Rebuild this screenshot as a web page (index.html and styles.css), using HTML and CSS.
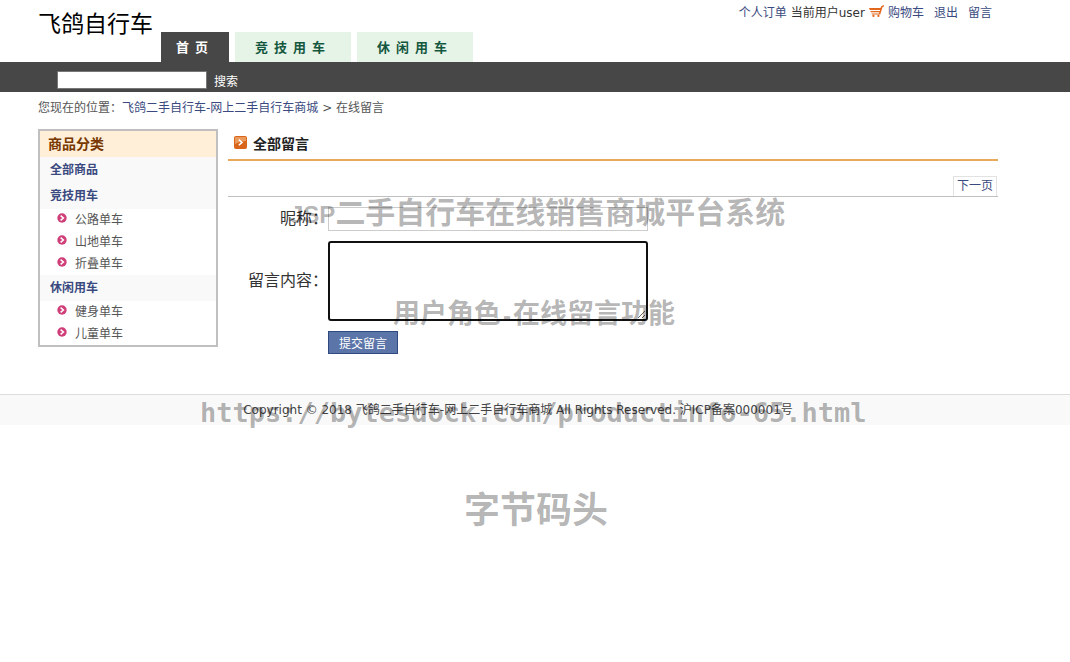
FILE: index.html
```html
<!DOCTYPE html>
<html lang="zh-CN">
<head>
  <meta charset="UTF-8">
  <meta name="viewport" content="width=device-width, initial-scale=1.0">
  <title>在线留言</title>
  <link rel="stylesheet" href="styles.css">
</head>
<body>
  <!-- 图标 -->
  <svg class="symbols" aria-hidden="true">
    <symbol id="dot" viewBox="0 0 10 10">
      <circle cx="5" cy="5" r="4.7" fill="#cf3e78"/>
      <path d="M3.6 2.6 6.4 5 3.6 7.4" fill="none" stroke="#fff" stroke-width="1.5"/>
    </symbol>
  </svg>

  <header class="header wrap">
    <div class="logo">飞鸽自行车</div>
    <nav class="tabs">
      <a class="tab active" href="#">首页</a>
      <a class="tab" href="#">竞技用车</a>
      <a class="tab" href="#">休闲用车</a>
    </nav>
    <div class="user-links">
      <a href="#">个人订单</a>
      <span class="user">当前用户user</span>
      <svg class="cart" viewBox="0 0 15 13">
        <path d="M0 3h11.4L12.6.9 15 0v1.5l-1.4.5-2.4 7.6H3L2.4 8.4H10l.4-1.1H2L1.2 5.9h9.7l.3-1H.8z" fill="#e2661c"/>
        <circle cx="4.4" cy="10.9" r="1.1" fill="#e2661c"/>
        <circle cx="9.4" cy="10.9" r="1.1" fill="#e2661c"/>
      </svg>
      <a class="cart-link" href="#">购物车</a>
      <a class="spaced" href="#">退出</a>
      <a class="spaced" href="#">留言</a>
    </div>
  </header>

  <div class="search-bar">
    <form class="search wrap">
      <input class="search-input" type="text" aria-label="搜索商品">
      <button class="search-button" type="button">搜索</button>
    </form>
  </div>

  <div class="breadcrumb wrap">您现在的位置：<a href="#">飞鸽二手自行车-网上二手自行车商城</a> &gt; 在线留言</div>

  <div class="content wrap">
    <aside class="sidebar">
      <h2 class="side-title">商品分类</h2>
      <a class="category" href="#">全部商品</a>
      <a class="category" href="#">竞技用车</a>
      <ul class="sub-list">
        <li><svg class="dot"><use href="#dot"/></svg><a href="#">公路单车</a></li>
        <li><svg class="dot"><use href="#dot"/></svg><a href="#">山地单车</a></li>
        <li><svg class="dot"><use href="#dot"/></svg><a href="#">折叠单车</a></li>
      </ul>
      <a class="category" href="#">休闲用车</a>
      <ul class="sub-list">
        <li><svg class="dot"><use href="#dot"/></svg><a href="#">健身单车</a></li>
        <li><svg class="dot"><use href="#dot"/></svg><a href="#">儿童单车</a></li>
      </ul>
    </aside>

    <main class="main">
      <h1 class="main-title">
        <svg class="title-icon" viewBox="0 0 13 13">
          <rect width="13" height="13" rx="2" fill="#d9651b"/>
          <path d="M1 2Q1 1 2 1h9q1 0 1 1v3Q6 5 1 8z" fill="#ec9a5c"/>
          <path d="M4.8 3.6 8 6.4 4.8 9.2" fill="none" stroke="#fff" stroke-width="1.5"/>
        </svg>
        全部留言
      </h1>
      <div class="pager"><a href="#">下一页</a></div>
      <form class="message-form">
        <label for="nickname">昵称：</label>
        <input class="nickname" id="nickname" type="text">
        <label for="message">留言内容：</label>
        <textarea class="message" id="message"></textarea>
        <button class="submit" type="button">提交留言</button>
      </form>
    </main>
  </div>

  <footer class="footer">
    <div class="wrap">Copyright © 2018 飞鸽二手自行车-网上二手自行车商城 All Rights Reserved. 沪ICP备案000001号</div>
  </footer>

  <!-- 水印 -->
  <div class="watermark mark-title"><span class="latin">JSP</span>二手自行车在线销售商城平台系统</div>
  <div class="watermark mark-feature">用户角色<span class="mono">-</span>在线留言功能</div>
  <div class="watermark mark-url">https://bytesdock.com/productinfo-65.html</div>
  <div class="watermark mark-brand">字节码头</div>
</body>
</html>
```

FILE: styles.css
```css
* {
  box-sizing: border-box;
}
body {
  margin: 0;
  position: relative;
  min-height: 100vh;
  background-color: #fff;
  color: #333;
  font-family: "DejaVu Sans", "Noto Sans CJK SC", sans-serif;
  font-size: 12px;
  line-height: 18px;
}
a {
  color: #3a4a80;
  text-decoration: none;
}
ul, h1, h2 {
  margin: 0;
  padding: 0;
  list-style: none;
}
input, textarea, button {
  font-family: inherit;
  font-size: 12px;
}
.symbols {
  position: absolute;
  width: 0;
  height: 0;
}
.wrap {
  padding-left: 38px;
  padding-right: 72px;
}

/* 头部 */
.header {
  display: flex;
  height: 62px;
}
.logo {
  padding-top: 8px;
  margin-right: 8px;
  color: #000;
  font-size: 23px;
  line-height: 32px;
}
.tabs {
  display: flex;
  align-items: flex-end;
  gap: 6px;
}
.tab {
  padding: 0 20px;
  background-color: #e5f4e7;
  color: #14573f;
  font-size: 13px;
  font-weight: bold;
  line-height: 32px;
  height: 30px;
  letter-spacing: 6px;
}
.tab.active {
  padding: 0 15px;
  background-color: #474747;
  color: #fff;
}
.user-links {
  display: flex;
  margin-left: auto;
  padding: 4px 6px 0 0;
}
.user {
  margin: 0 4px;
}
.cart {
  width: 15px;
  height: 13px;
  margin-top: 1px;
}
.cart-link {
  margin-left: 4px;
}
.spaced {
  margin-left: 10px;
}

/* 搜索 */
.search-bar {
  background-color: #474747;
}
.search {
  display: flex;
  align-items: center;
  height: 30px;
  padding-top: 6px;
}
.search-input {
  width: 150px;
  height: 18px;
  margin-left: 19px;
  border: 1px solid #777;
  background-color: #fff;
}
.search-button {
  padding: 0 7px;
  border: 0;
  background: none;
  color: #fff;
}

.breadcrumb {
  padding-top: 7px;
  height: 37px;
  color: #555;
}

/* 左侧分类 */
.content {
  display: flex;
  align-items: flex-start;
  gap: 10px;
}
.sidebar {
  width: 180px;
  flex-shrink: 0;
  border: 2px solid #c0c0c0;
}
.side-title {
  padding-left: 8px;
  background-color: #ffefd9;
  color: #783800;
  font-size: 14px;
  line-height: 26px;
}
.category {
  display: block;
  padding-left: 10px;
  background-color: #f9f9f9;
  font-weight: bold;
  line-height: 26px;
}
.sub-list li {
  display: flex;
  padding-left: 17px;
  line-height: 22px;
}
.sub-list a {
  color: #555;
}
.dot {
  width: 10px;
  height: 10px;
  margin: 4px 8px 0 0;
}

/* 留言 */
.main {
  flex: 1;
  min-height: 265px;
}
.main-title {
  display: flex;
  gap: 6px;
  height: 32px;
  padding-left: 6px;
  border-bottom: 2px solid #e8a95c;
  color: #222;
  font-size: 14px;
  line-height: 30px;
}
.title-icon {
  width: 13px;
  height: 13px;
  margin-top: 7px;
}
.pager {
  display: flex;
  justify-content: flex-end;
  margin-top: 15px;
  padding-right: 1px;
  border-bottom: 1px solid #c0c0c0;
}
.pager a {
  padding: 0 3px;
  border: 1px solid #e2e2e2;
  border-bottom: 0;
  line-height: 19px;
}
.message-form {
  display: grid;
  grid-template-columns: 100px 320px;
  gap: 10px 0;
  align-items: center;
  margin-top: 10px;
}
.message-form label {
  text-align: right;
  font-size: 16px;
}
.nickname {
  height: 24px;
  border: 1px solid #ccc;
  background-color: #fff;
}
.message {
  display: block;
  height: 80px;
  border: 2px solid #101010;
  border-radius: 3px;
  background-color: #fff;
}
.submit {
  grid-column: 2;
  justify-self: start;
  width: 70px;
  height: 23px;
  padding: 0;
  border: 1px solid #2f4a80;
  background-color: #5b75a8;
  color: #fff;
}

.footer {
  border-top: 1px solid #ddd;
  background-color: #f9f9f9;
  line-height: 30px;
  color: #444;
  text-align: center;
}

/* 水印叠加在页面上方 */
.watermark {
  position: absolute;
  color: rgba(0, 0, 0, 0.3);
  font-family: "Noto Sans CJK SC", sans-serif;
  font-weight: bold;
  line-height: 40px;
  white-space: nowrap;
  pointer-events: none;
}
.latin {
  font-family: "Liberation Sans", sans-serif;
  font-size: 24px;
}
.mono {
  font-family: "DejaVu Sans Mono", monospace;
  font-size: 20px;
}
.mark-title {
  top: 190px;
  left: 290px;
  font-size: 30px;
}
.mark-feature {
  top: 292px;
  left: 393px;
  font-size: 27px;
}
.mark-url {
  top: 393px;
  left: 200px;
  font-family: "DejaVu Sans Mono", monospace;
  font-size: 27px;
}
.mark-brand {
  top: 487px;
  left: 464px;
  font-size: 36px;
}
```
